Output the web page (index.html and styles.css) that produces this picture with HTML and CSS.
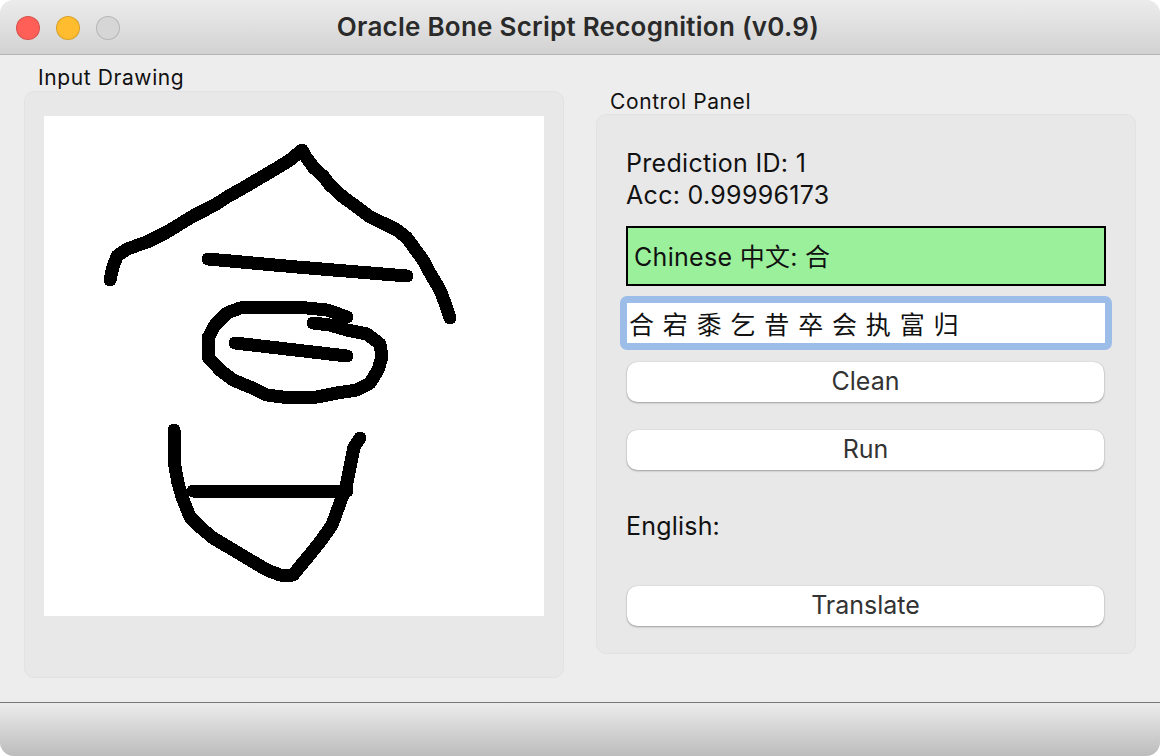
FILE: index.html
```html
<!DOCTYPE html>
<html lang="en">
<head>
    <meta charset="UTF-8">
    <title>Oracle Bone Script Recognition (v0.9)</title>
    <link rel="stylesheet" href="styles.css">
</head>
<body>
    <div class="window">
        <div class="titlebar">
            <div class="lights">
                <span class="light red"></span>
                <span class="light yellow"></span>
                <span class="light gray"></span>
            </div>
            <h1 class="title">Oracle Bone Script Recognition (v0.9)</h1>
        </div>

        <div class="content">
            <div class="group left">
                <div class="group-label">Input Drawing</div>
                <div class="panel draw-panel">
                    <svg class="canvas" width="500" height="500" viewBox="44 116 500 500">
                        <g class="ink">
                            <polyline points="110,280 113,267 117,256 127,249 147,242 167,232 180,224 193,216 207,209 218,203 227,197 243,188 260,178 277,168 290,160 302,150 306,157 314,168 323,176 330,185 343,197 357,207 370,217 383,223 397,230 407,238 415,249 423,260 430,273 440,290 445,303 450,318"/>
                            <polyline points="208,259 297,267 407,276"/>
                            <polyline points="313,323 330,325 347,330 367,334 380,344 382,357 378,370 370,383 357,390 337,393 317,397 290,398 267,395 250,387 233,380 220,370 208,357 208,338 215,325 227,313 240,308 273,307 307,308 327,310 347,317"/>
                            <polyline points="235,343 347,356"/>
                            <polyline points="174,430 174,447 175,467 178,483 182,497 190,517 200,527 213,538 230,548 250,560 267,570 280,575 293,575 307,558 320,542 332,525 340,503 346,487 350,467 354,447 360,438"/>
                            <polyline points="193,491 347,491"/>
                        </g>
                    </svg>
                </div>
            </div>

            <div class="group right">
                <div class="group-label">Control Panel</div>
                <div class="panel control-panel">
                    <div class="info">
                        <div>Prediction ID: 1</div>
                        <div>Acc: 0.99996173</div>
                    </div>
                    <div class="result">Chinese 中文: 合</div>
                    <input class="candidates" type="text" value="合 宕 黍 乞 昔 卒 会 执 富 归">
                    <button class="btn">Clean</button>
                    <button class="btn run">Run</button>
                    <div class="english">English:</div>
                    <button class="btn">Translate</button>
                </div>
            </div>
        </div>

        <div class="footer"></div>
    </div>
</body>
</html>
```

FILE: styles.css
```css
* {
    box-sizing: border-box;
}

html, body {
    margin: 0;
    height: 100%;
    background-color: #fff;
}

body {
    font-family: Inter, "Liberation Sans", "Noto Sans CJK SC", sans-serif;
    color: #111;
    overflow: hidden;
}

.window {
    height: 756px;
    display: flex;
    flex-direction: column;
    background-color: #ededed;
    border-radius: 14px;
    overflow: hidden;
}

/* Title bar */
.titlebar {
    height: 55px;
    flex: none;
    display: flex;
    align-items: center;
    justify-content: center;
    position: relative;
    background: linear-gradient(#ececec, #d2d2d2);
    border-bottom: 1px solid #b4b4b4;
}

.lights {
    position: absolute;
    left: 16px;
    top: 16px;
    display: flex;
    gap: 16px;
}

.light {
    width: 24px;
    height: 24px;
    border-radius: 50%;
    border: 1px solid rgba(0, 0, 0, 0.15);
}

.red {
    background-color: #ff5f57;
}

.yellow {
    background-color: #febc2e;
}

.gray {
    background-color: #d6d6d6;
}

.title {
    margin: 0 4px 2px 0;
    font-size: 26px;
    font-weight: 600;
    letter-spacing: 0.25px;
    color: #2a2a2a;
}

/* Main area */
.content {
    flex: 1;
    display: flex;
    gap: 32px;
    padding: 0 24px;
}

.group {
    width: 540px;
    display: flex;
    flex-direction: column;
}

.group-label {
    height: 24px;
    font-size: 21px;
    line-height: 24px;
    letter-spacing: 0.6px;
}

.left {
    padding-top: 11px;
}

.left .group-label {
    margin-left: 14px;
    margin-bottom: 1px;
}

.right {
    padding-top: 35px;
}

.right .group-label {
    margin-left: 14px;
}

.panel {
    background-color: #e8e8e8;
    border: 1px solid #e2e2e2;
    border-radius: 10px;
}

.draw-panel {
    height: 587px;
    padding: 24px 19px;
}

.canvas {
    display: block;
    background-color: #fff;
}

.ink polyline {
    fill: none;
    stroke: #000;
    stroke-width: 13;
    stroke-linecap: round;
    stroke-linejoin: round;
    shape-rendering: crispEdges;
}

.control-panel {
    height: 540px;
    padding: 32px 29px 0;
    display: flex;
    flex-direction: column;
    align-items: stretch;
}

.info {
    font-size: 25px;
    line-height: 32px;
    letter-spacing: 0.3px;
}

.result {
    margin-top: 15px;
    height: 60px;
    display: flex;
    align-items: center;
    padding: 0 0 2px 6px;
    font-size: 25px;
    letter-spacing: 0.3px;
    background-color: #9bf09b;
    border: 2px solid #000;
}

.candidates {
    flex: none;
    width: 492px;
    height: 54px;
    margin: 10px 0 0 -6px;
    padding: 0 2px;
    font: 25px Inter, "Noto Sans CJK SC", sans-serif;
    word-spacing: 1.8px;
    color: #111;
    background-color: #fff;
    border: 7px solid #9dbde9;
    border-radius: 7px;
    outline: none;
}

.btn {
    height: 40px;
    margin: 12px 2px 0 1px;
    padding: 0 0 2px;
    font: 25px Inter, "Liberation Sans", sans-serif;
    color: #333;
    background-color: #fff;
    border: none;
    border-radius: 10px;
    box-shadow: 0 0 1px rgba(0, 0, 0, 0.25), 0 1px 2px rgba(0, 0, 0, 0.3);
}

.run {
    margin-top: 28px;
}

.english {
    margin-top: 41px;
    height: 30px;
    font-size: 25px;
    line-height: 30px;
    letter-spacing: 0.2px;
}

.english + .btn {
    margin-top: 45px;
}

/* Bottom bar */
.footer {
    height: 54px;
    flex: none;
    border-top: 1px solid #777;
    background: linear-gradient(#ececec, #bcbcbc);
}
```
